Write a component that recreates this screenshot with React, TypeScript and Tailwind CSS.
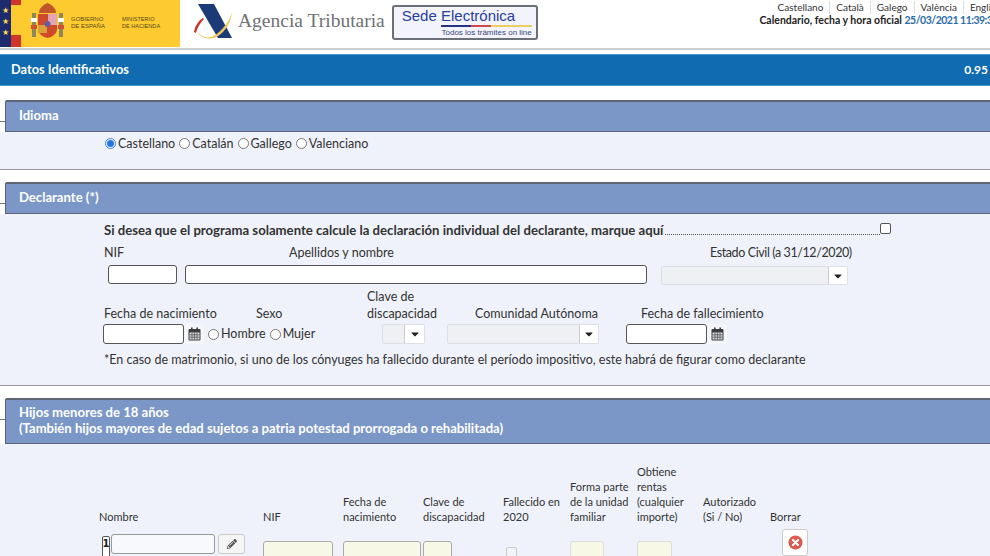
import type { ReactNode } from "react";
import { FaCaretDown, FaPencilAlt } from "react-icons/fa";

function Logos() {
  return (
    <div className="flex items-start">
      {/* Gobierno de España */}
      <div className="flex h-[47px] w-[180px] bg-[#fdcb2f]">
        <div className="flex h-full w-[11px] flex-col items-center gap-[2px] bg-[#1d2a6d] pt-[6px] text-[8px] leading-[9px] text-[#fdd84f]">
          <span>★</span>
          <span>★</span>
          <span>★</span>
        </div>
        <div className="flex h-full w-[10px] flex-col">
          <div className="h-[5px] bg-[#d0342c]" />
          <div className="h-[30px] bg-[#fdcb2f]" />
          <div className="h-[12px] bg-[#d0342c]" />
        </div>
        <svg viewBox="0 0 35 36" className="ml-[9px] mt-[3px] h-[36px] w-[35px] shrink-0">
          <rect x="2" y="10" width="4" height="24" fill="#8c8a5a" />
          <rect x="29" y="10" width="4" height="24" fill="#8c8a5a" />
          <rect x="1" y="15" width="6" height="4" fill="#fff" />
          <rect x="28" y="15" width="6" height="4" fill="#fff" />
          <rect x="1" y="22" width="6" height="4" fill="#d0503a" />
          <rect x="28" y="22" width="6" height="4" fill="#d0503a" />
          <path d="M17.5 0 C22 2 26 5 26 10 L9 10 C9 5 13 2 17.5 0 Z" fill="#c2552a" />
          <path d="M8 11 H27 V26 C27 31 22 34 17.5 35 C13 34 8 31 8 26 Z" fill="#cf4a2b" />
          <rect x="18" y="11" width="9" height="11" fill="#e6a3b3" />
          <rect x="8" y="22" width="9" height="8" fill="#d9a13a" />
          <circle cx="17.5" cy="21" r="3" fill="#6a5aa0" />
        </svg>
        <div className="ml-[6px] mt-[16px] font-['Liberation_Sans',sans-serif] text-[6px] leading-[7px] text-[#5a4a1e]">
          GOBIERNO
          <br />
          DE ESPAÑA
        </div>
        <div className="ml-[17px] mt-[16px] font-['Liberation_Sans',sans-serif] text-[5.6px] leading-[7px] text-[#5a4a1e]">
          MINISTERIO
          <br />
          DE HACIENDA
        </div>
      </div>

      {/* Agencia Tributaria */}
      <svg viewBox="0 0 40 37" className="ml-[14px] mt-[3px] h-[37px] w-[40px] shrink-0">
        <path d="M4 1 H20 L38 35 H24 Z" fill="#1c3a78" />
        <path d="M0 29 C1 23 4 18 9 15 L10 16 C6 20 3 25 2 30 Z" fill="#c9342f" />
        <path d="M3 29 C10 36 17 36 24 30 C30 25 36 17 38 9 C37 19 32 28 24 33 C16 38 7 35 3 29 Z" fill="#efc75a" />
      </svg>
      <div className="ml-[4px] mt-[9px] whitespace-nowrap font-['Liberation_Serif',serif] text-[19.5px] leading-[24px] text-[#6f7276]">
        Agencia Tributaria
      </div>

      {/* Sede electronica */}
      <div className="ml-[7px] mt-[5px] flex h-[35px] w-[146px] flex-col rounded-[3px] border-2 border-[#6b6f78] bg-[#f3f3fb] pl-[8px]">
        <div className="w-fit font-['Liberation_Sans',sans-serif] text-[15px] leading-[18px] text-[#27409a]">Sede Electrónica</div>
        <div className="flex h-[2px] w-[130px]">
          <div className="ml-[39px] w-[30px] bg-[#27328a]" />
          <div className="w-[20px] bg-[#cf4a4a]" />
          <div className="w-[41px] bg-[#e9cf5f]" />
        </div>
        <div className="mr-[4px] mt-[1px] text-right font-['Liberation_Sans',sans-serif] text-[8px] leading-[9px] text-[#3a4a7a]">Todos los trámites on line</div>
      </div>
    </div>
  );
}

function TopRight() {
  const langs = ["Castellano", "Català", "Galego", "València", "English"];
  return (
    <div className="mr-[-8px] flex flex-col items-end pt-px text-[10.5px] leading-[13px]">
      <div className="mr-[-3px] flex text-[10px] text-[#333]">
        {langs.map((l, i) => (
          <span key={l} className={i === 0 ? "pr-[6px]" : "border-l border-[#ddd] px-[6px] last:pr-0"}>
            {l}
          </span>
        ))}
      </div>
      <div className="whitespace-nowrap font-bold text-[#222]">
        Calendario, fecha y hora oficial <span className="tracking-[-0.5px] text-[#2b6ca8]">25/03/2021 11:39:38</span>
      </div>
    </div>
  );
}

function Section({
  title,
  children,
  className,
  headClass,
}: {
  title: ReactNode;
  children: ReactNode;
  className?: string;
  headClass?: string;
}) {
  return (
    <section className="relative">
      <div className="absolute left-0 top-[21px] h-px w-[5px] bg-[#777]" />
      <div
        className={`ml-[5px] rounded-tl-[2px] border-t-2 border-b border-l border-[#5b6470] bg-[#7b97c8] pl-[13px] text-[13.1px] font-bold leading-[16px] text-white ${
          headClass ?? "pb-[8px] pt-[5px]"
        }`}
      >
        {title}
      </div>
      <div className={`border-b border-[#999] bg-[#eff2fa] ${className ?? ""}`}>{children}</div>
    </section>
  );
}

function Radio({ checked, label }: { checked?: boolean; label: string }) {
  return (
    <span className="inline-flex items-center">
      <span
        className={`mr-[2px] flex h-[11px] w-[11px] items-center justify-center rounded-full border ${
          checked ? "border-[#2f7fe0] bg-white" : "border-[#777] bg-white"
        }`}
      >
        {checked && <span className="h-[7px] w-[7px] rounded-full bg-[#2477e0]" />}
      </span>
      {label}
    </span>
  );
}

function TextBox({ className }: { className: string }) {
  return <div className={`rounded-[3px] border border-[#555] bg-white ${className}`} />;
}

function SelectBox({ className, arrow }: { className: string; arrow: string }) {
  return (
    <div className={`flex overflow-hidden rounded-[2px] border border-[#dcdfe6] ${className}`}>
      <div className="flex-1 bg-[#eef0f3]" />
      <div className={`flex items-center justify-center border-l border-[#c9ccd2] bg-white text-[12px] text-[#222] ${arrow}`}>
        <FaCaretDown />
      </div>
    </div>
  );
}

function CalendarIcon() {
  return (
    <svg viewBox="0 0 13 14" className="h-[14px] w-[13px]" fill="none">
      <rect x="0.5" y="2" width="12" height="11.5" rx="1" fill="#3d3d3d" />
      <rect x="3" y="0.5" width="1.6" height="3" fill="#3d3d3d" />
      <rect x="8.4" y="0.5" width="1.6" height="3" fill="#3d3d3d" />
      <path d="M1.5 5.5 H11.5 V12.5 H1.5 Z" fill="#dfe1e6" />
      <path d="M1.5 7.8 H11.5 M1.5 10.2 H11.5 M4 5.5 V12.5 M6.5 5.5 V12.5 M9 5.5 V12.5" stroke="#3d3d3d" strokeWidth="0.7" />
    </svg>
  );
}

function DateBox({ className }: { className?: string }) {
  return (
    <div className={`flex h-[20px] ${className ?? ""}`}>
      <TextBox className="h-[20px] w-[81px]" />
      <div className="flex h-[20px] w-[20px] items-center justify-center rounded-r-[3px] bg-[#f4f6fb]">
        <CalendarIcon />
      </div>
    </div>
  );
}

const columns = [
  { w: "w-[80px]", lines: ["NIF"] },
  { w: "w-[80px]", lines: ["Fecha de", "nacimiento"] },
  { w: "w-[80px]", lines: ["Clave de", "discapacidad"] },
  { w: "w-[67px]", lines: ["Fallecido en", "2020"] },
  { w: "w-[67px]", lines: ["Forma parte", "de la unidad", "familiar"] },
  { w: "w-[66px]", lines: ["Obtiene", "rentas", "(cualquier", "importe)"] },
  { w: "w-[67px]", lines: ["Autorizado", "(Si / No)"] },
  { w: "w-[60px]", lines: ["Borrar"] },
];

function ChildrenTable() {
  return (
    <div className="pl-[99px] pt-[20px]">
      <div className="flex items-end text-[11px] leading-[15px] text-[#333]">
        <div className="w-[164px]">Nombre</div>
        {columns.map((c) => (
          <div key={c.lines[0]} className={c.w}>
            {c.lines.map((l) => (
              <div key={l} className="whitespace-nowrap">
                {l}
              </div>
            ))}
          </div>
        ))}
      </div>
      <div className="relative mt-[10px] flex h-[40px] items-start">
        <div className="ml-[3px] mt-[2px] flex h-[24px] w-[8px] justify-center rounded-[2px] border border-[#555] bg-white font-['DejaVu_Sans',sans-serif] text-[10px] font-bold leading-[14px] text-[#222]">
          1
        </div>
        <div className="ml-px h-[20px] w-[104px] rounded-[3px] border border-[#999] bg-[#f8f9fc]" />
        <div className="ml-[3px] flex h-[20px] w-[27px] items-center justify-center rounded-[3px] border border-[#ccc] bg-[#f5f5f5] text-[10px] text-[#555]">
          <FaPencilAlt />
        </div>
        <div className="ml-[18px] mt-[7px] h-[20px] w-[70px] rounded-[3px] border border-[#aaa] bg-[#f7f8e6]" />
        <div className="ml-[10px] mt-[7px] h-[20px] w-[78px] rounded-[3px] border border-[#aaa] bg-[#f7f8e6]" />
        <div className="ml-[2px] mt-[7px] h-[20px] w-[29px] rounded-[3px] border border-[#aaa] bg-[#f7f8e6]" />
        <div className="ml-[54px] mt-[13px] h-[11px] w-[11px] rounded-[2px] border border-[#ccc] bg-[#f3f4f8]" />
        <div className="ml-[53px] mt-[7px] h-[20px] w-[34px] rounded-[3px] border border-[#ddd] bg-[#f7f8e6]" />
        <div className="ml-[33px] mt-[7px] h-[20px] w-[35px] rounded-[3px] border border-[#ddd] bg-[#f7f8e6]" />
        <div className="ml-[110px] mt-[-5px] flex h-[27px] w-[26px] items-center justify-center rounded-[3px] border border-[#ccc] bg-white">
          <svg viewBox="0 0 16 16" className="h-[15px] w-[15px]">
            <circle cx="8" cy="8" r="7.5" fill="#df5a4e" />
            <path d="M5.3 5.3 L10.7 10.7 M10.7 5.3 L5.3 10.7" stroke="#fff" strokeWidth="2.2" strokeLinecap="round" />
          </svg>
        </div>
      </div>
    </div>
  );
}

export default function App() {
  return (
    <div className="h-[556px] w-[990px] overflow-hidden bg-white font-['Lato',sans-serif] text-[#333]">
      <header className="flex h-[48px] justify-between overflow-hidden">
        <Logos />
        <TopRight />
      </header>
      <div className="h-[2px] bg-[#ccc]" />
      <div className="mt-[4px] flex h-[32px] items-center justify-between border-y border-[#4f9ad0] bg-[#106bb0] pl-[11px] pr-[2px] text-[12px] font-bold text-white">
        <span className="text-[12.8px]">Datos Identificativos</span>
        <span>0.95</span>
      </div>

      <div className="mt-[14px] flex flex-col gap-[12px]">
        <Section title="Idioma" className="h-[38px]">
          <div className="flex gap-[4px] pl-[105px] pt-[4px] text-[12.5px] leading-[15px]">
            <Radio checked label="Castellano" />
            <Radio label="Catalán" />
            <Radio label="Gallego" />
            <Radio label="Valenciano" />
          </div>
        </Section>

        <Section title="Declarante (*)" className="h-[172px]">
          <div className="pl-[104px] text-[12.5px] leading-[16px]">
            <div className="flex items-end pt-[8px]">
              <span className="whitespace-nowrap text-[13.15px] font-bold">Si desea que el programa solamente calcule la declaración individual del declarante, marque aquí</span>
              <div className="mb-[3px] ml-[2px] h-0 w-[215px] border-b border-dotted border-[#555]" />
              <div className="mb-[4px] h-[11px] w-[11px] rounded-[2px] border border-[#555] bg-white" />
            </div>
            <div className="mt-[7px] flex">
              <span className="w-[185px]">NIF</span>
              <span className="w-[421px]">Apellidos y nombre</span>
              <span className="tracking-[-0.4px]">Estado Civil (a 31/12/2020)</span>
            </div>
            <div className="mt-[4px] flex items-start pl-[4px]">
              <TextBox className="h-[19px] w-[69px]" />
              <TextBox className="ml-[8px] h-[19px] w-[462px]" />
              <SelectBox className="ml-[14px] mt-[1px] h-[19px] w-[187px]" arrow="w-[19px]" />
            </div>
            <div className="mt-[3px] flex h-[34px] items-end">
              <span className="w-[152px]">Fecha de nacimiento</span>
              <span className="w-[111px]">Sexo</span>
              <span className="w-[108px] leading-[17px]">
                Clave de
                <br />
                discapacidad
              </span>
              <span className="w-[166px]">Comunidad Autónoma</span>
              <span>Fecha de fallecimiento</span>
            </div>
            <div className="mt-[2px] flex items-center">
              <DateBox className="-ml-[1px]" />
              <span className="ml-[4px] flex gap-[4px]">
                <Radio label="Hombre" />
                <Radio label="Mujer" />
              </span>
              <SelectBox className="ml-[67px] h-[20px] w-[43px]" arrow="w-[20px]" />
              <SelectBox className="ml-[22px] h-[20px] w-[152px]" arrow="w-[19px]" />
              <DateBox className="ml-[27px]" />
            </div>
            <div className="mt-[8px] whitespace-nowrap">*En caso de matrimonio, si uno de los cónyuges ha fallecido durante el período impositivo, este habrá de figurar como declarante</div>
          </div>
        </Section>

        <Section
          title={
            <>
              Hijos menores de 18 años
              <br />
              (También hijos mayores de edad sujetos a patria potestad prorrogada o rehabilitada)
            </>
          }
          headClass="pb-[7px] pt-[4px]"
          className="h-[113px] overflow-hidden border-b-0"
        >
          <ChildrenTable />
        </Section>
      </div>
    </div>
  );
}
